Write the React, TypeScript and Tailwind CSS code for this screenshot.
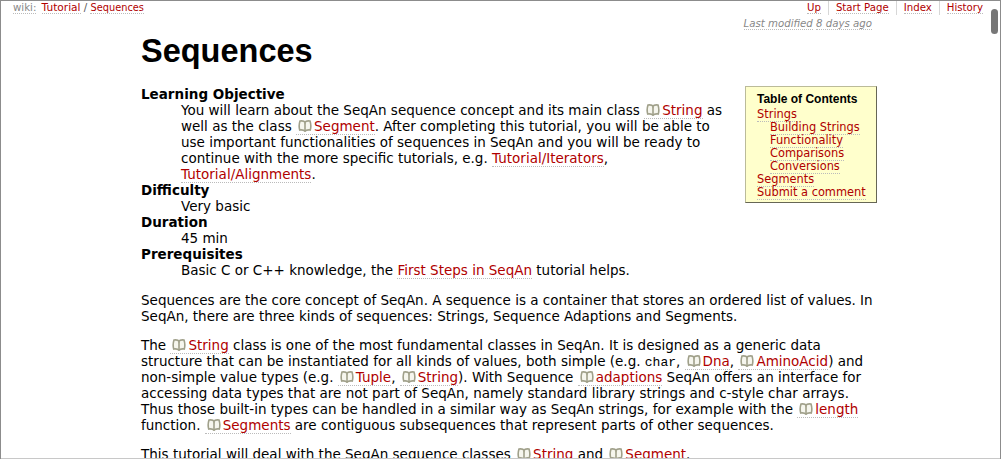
import React from 'react';

const LINK = 'text-[#b00000] border-b border-dotted border-[#bbbbbb]';

const BookIcon = () => (
  <svg width="14" height="12" viewBox="0 0 14 12" className="inline-block align-[-1px] ml-[2px] mr-[2px]" fill="#f6f6ee" stroke="#a0a08a" strokeWidth="1.6">
    <path d="M7 2.500C6.500 1.200 4.500.7 2 1c-1 3-1 6.500-.3 9C4 9.700 6 10 7 11.200c1-1.200 3-1.500 5.300-1.200.7-2.500.7-6-.3-9C9.500.7 7.500 1.200 7 2.500z" />
    <path d="M7 2.500v8.700" />
  </svg>
);

const A = ({ children, wiki }: { children: React.ReactNode; wiki?: boolean }) => (
  <a className={LINK}>
    {wiki && <BookIcon />}
    {children}
  </a>
);

const NAV_ITEMS = ['Up', 'Start Page', 'Index', 'History'];

const Toc = () => (
  <div className="absolute left-[744px] top-[85px] w-[132px] h-[117px] bg-[#ffffcc] border border-[#bbbb99] border-r-[#666655] border-b-[#666655] pl-[11px] pt-[6px] text-[11.400px] leading-[13px] whitespace-nowrap">
    <div className="font-['Liberation_Sans',Arial,sans-serif] font-bold text-[12px] text-black h-[14px]">Table of Contents</div>
    <div className="mt-px"><A>Strings</A></div>
    <div className="pl-[13px]"><A>Building Strings</A></div>
    <div className="pl-[13px]"><A>Functionality</A></div>
    <div className="pl-[13px]"><A>Comparisons</A></div>
    <div className="pl-[13px]"><A>Conversions</A></div>
    <div><A>Segments</A></div>
    <div><A>Submit a comment</A></div>
  </div>
);

const App: React.FC = () => {
  return (
    <div className="relative w-[1001px] h-[459px] overflow-hidden bg-white border-t border-l border-r border-[#8c8c8c] font-['DejaVu_Sans',Verdana,sans-serif] text-[13.500px] leading-[16px] text-black">
      {/* Top bar */}
      <div className="flex justify-between h-[14px] pl-[12px] pr-[17px] text-[10.200px] leading-[13px] whitespace-nowrap">
        <div className="text-[#888888]">
          <span className="border-b border-dotted border-[#bbbbbb] mr-[2px]">wiki:</span>{' '}
          <span className="text-[10.600px]"><A>Tutorial</A></span> <span className="text-[#555555]">/</span> <span className="text-[9.800px]"><A>Sequences</A></span>
        </div>
        <div className="flex">
          {NAV_ITEMS.map((item, i) => (
            <div key={item} className={i === 0 ? 'pr-[7px]' : 'px-[7px] border-l border-[#d7d7d7] last:pr-0'}>
              <A>{item}</A>
            </div>
          ))}
        </div>
      </div>
      <div className="h-[18px] pr-[128px] pt-[2px] text-right text-[10.200px] leading-[13px] italic text-[#888888] whitespace-nowrap">
        <span className="border-b border-dotted border-[#bbbbbb]">Last modified</span>{' '}
        <span className="border-b border-dotted border-[#bbbbbb]">8 days ago</span>
      </div>

      {/* Page body */}
      <div className="pl-[140px] whitespace-nowrap">
        <h1 className="font-['Liberation_Sans',Arial,sans-serif] font-bold text-[32.500px] leading-[36px]">Sequences</h1>
        <dl className="mt-[17px]">
          <dt className="font-bold">Learning Objective</dt>
          <dd className="pl-[40px]">
            You will learn about the SeqAn sequence concept and its main class <A wiki>String</A> as<br />
            well as the class <A wiki>Segment</A>. After completing this tutorial, you will be able to<br />
            use important functionalities of sequences in SeqAn and you will be ready to<br />
            continue with the more specific tutorials, e.g. <A>Tutorial/Iterators</A>,<br />
            <A>Tutorial/Alignments</A>.
          </dd>
          <dt className="font-bold">Difficulty</dt>
          <dd className="pl-[40px]">Very basic</dd>
          <dt className="font-bold">Duration</dt>
          <dd className="pl-[40px]">45 min</dd>
          <dt className="font-bold">Prerequisites</dt>
          <dd className="pl-[40px]">Basic C or C++ knowledge, the <A>First Steps in SeqAn</A> tutorial helps.</dd>
        </dl>
        <p className="mt-[14px]">
          Sequences are the core concept of SeqAn. A sequence is a container that stores an ordered list of values. In<br />
          SeqAn, there are three kinds of sequences: Strings, Sequence Adaptions and Segments.
        </p>
        <p className="mt-[13px]">
          The <A wiki>String</A> class is one of the most fundamental classes in SeqAn. It is designed as a generic data<br />
          structure that can be instantiated for all kinds of values, both simple (e.g. <code className="font-['Liberation_Mono',monospace] text-[13px] leading-none">char</code>, <A wiki>Dna</A>, <A wiki>AminoAcid</A>) and<br />
          non-simple value types (e.g. <A wiki>Tuple</A>, <A wiki>String</A>). With Sequence <A wiki>adaptions</A> SeqAn offers an interface for<br />
          accessing data types that are not part of SeqAn, namely standard library strings and c-style char arrays.<br />
          Thus those built-in types can be handled in a similar way as SeqAn strings, for example with the <A wiki>length</A><br />
          function. <A wiki>Segments</A> are contiguous subsequences that represent parts of other sequences.
        </p>
        <p className="mt-[13px]">
          This tutorial will deal with the SeqAn sequence classes <A wiki>String</A> and <A wiki>Segment</A>.
        </p>
      </div>

      <Toc />

      {/* Overlay scrollbar */}
      <div className="absolute left-[990px] top-[8px] w-[7px] h-[25px] rounded-full bg-[#777777]" />
      <div className="absolute left-0 right-0 bottom-0 h-px bg-[#c8c8c8]" />
    </div>
  );
};

export default App;
